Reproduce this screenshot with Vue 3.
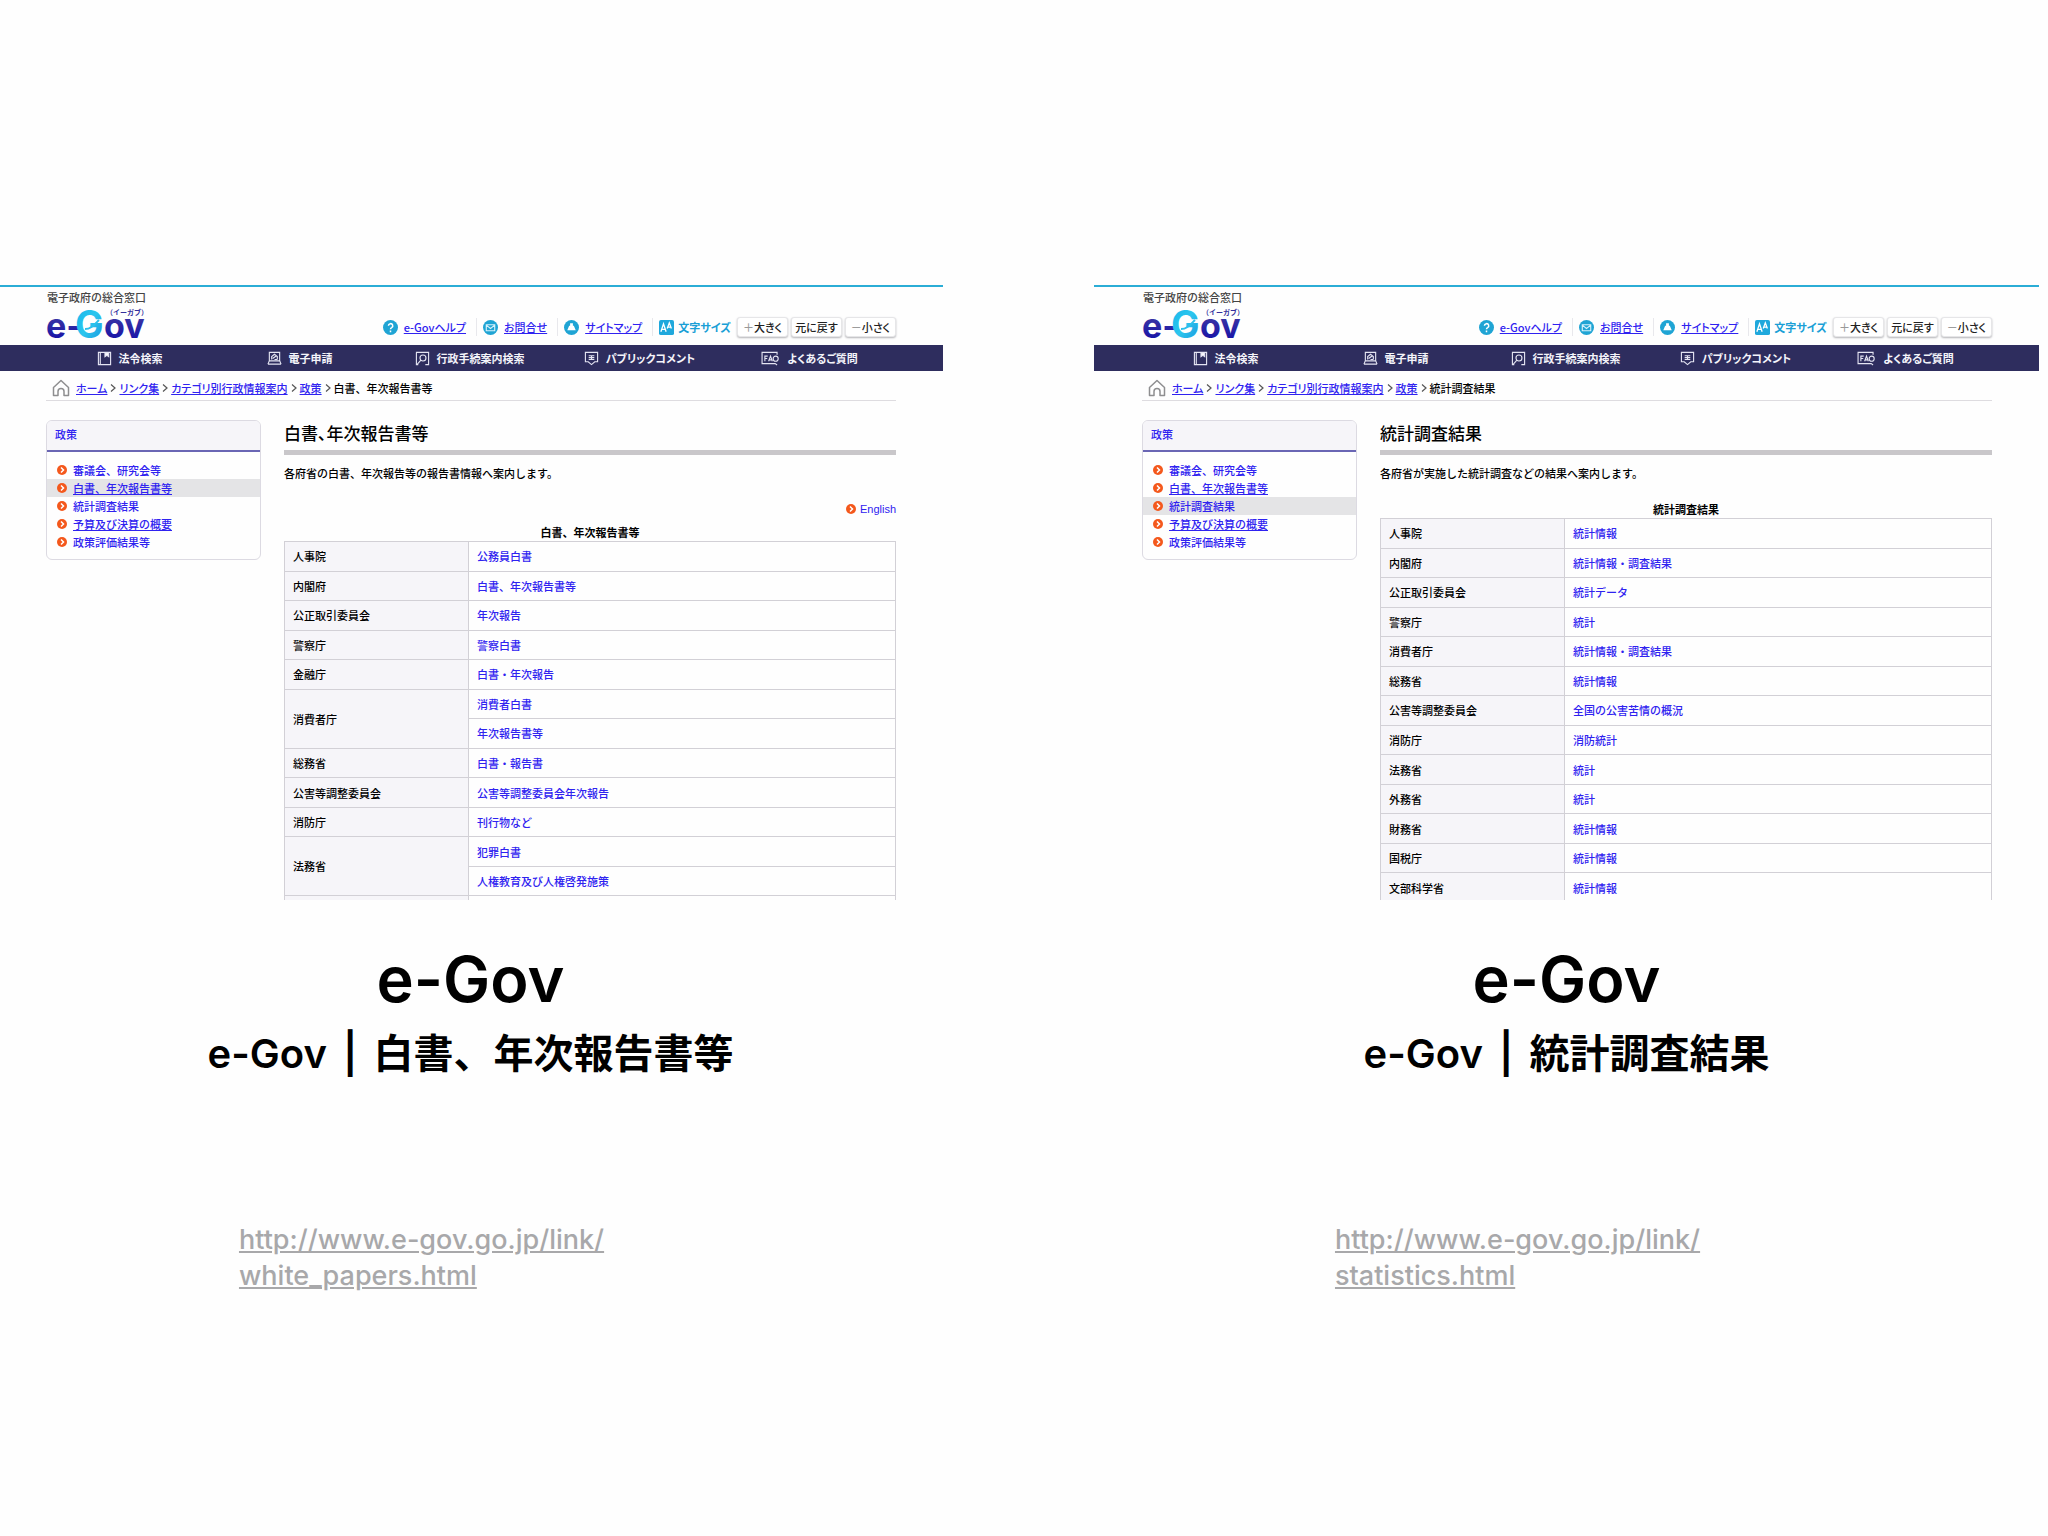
<script setup>
const utilities = [
  { icon: 'help', label: 'e-Govヘルプ' },
  { icon: 'mail', label: 'お問合せ' },
  { icon: 'map', label: 'サイトマップ' },
]

const sizes = [
  { sign: '＋', label: '大きく' },
  { sign: '', label: '元に戻す' },
  { sign: '－', label: '小さく' },
]

const services = [
  { icon: 'law', label: '法令検索' },
  { icon: 'apply', label: '電子申請' },
  { icon: 'search', label: '行政手続案内検索' },
  { icon: 'comment', label: 'パブリックコメント' },
  { icon: 'faq', label: 'よくあるご質問' },
]

const crumbs = ['ホーム', 'リンク集', 'カテゴリ別行政情報案内', '政策']

const topics = [
  '審議会、研究会等',
  '白書、年次報告書等',
  '統計調査結果',
  '予算及び決算の概要',
  '政策評価結果等',
]

const sites = [
  {
    id: 'papers',
    title: '白書、年次報告書等',
    intro: '各府省の白書、年次報告等の報告書情報へ案内します。',
    english: true,
    host: 'http://www.e-gov.go.jp/link/',
    file: 'white_papers.html',
    rows: [
      { name: '人事院', links: ['公務員白書'] },
      { name: '内閣府', links: ['白書、年次報告書等'] },
      { name: '公正取引委員会', links: ['年次報告'] },
      { name: '警察庁', links: ['警察白書'] },
      { name: '金融庁', links: ['白書・年次報告'] },
      { name: '消費者庁', links: ['消費者白書', '年次報告書等'] },
      { name: '総務省', links: ['白書・報告書'] },
      { name: '公害等調整委員会', links: ['公害等調整委員会年次報告'] },
      { name: '消防庁', links: ['刊行物など'] },
      { name: '法務省', links: ['犯罪白書', '人権教育及び人権啓発施策'] },
      { name: '', links: [''] },
    ],
  },
  {
    id: 'statistics',
    title: '統計調査結果',
    intro: '各府省が実施した統計調査などの結果へ案内します。',
    english: false,
    host: 'http://www.e-gov.go.jp/link/',
    file: 'statistics.html',
    rows: [
      { name: '人事院', links: ['統計情報'] },
      { name: '内閣府', links: ['統計情報・調査結果'] },
      { name: '公正取引委員会', links: ['統計データ'] },
      { name: '警察庁', links: ['統計'] },
      { name: '消費者庁', links: ['統計情報・調査結果'] },
      { name: '総務省', links: ['統計情報'] },
      { name: '公害等調整委員会', links: ['全国の公害苦情の概況'] },
      { name: '消防庁', links: ['消防統計'] },
      { name: '法務省', links: ['統計'] },
      { name: '外務省', links: ['統計'] },
      { name: '財務省', links: ['統計情報'] },
      { name: '国税庁', links: ['統計情報'] },
      { name: '文部科学省', links: ['統計情報'] },
    ],
  },
]
</script>

<template>
  <main class="page">
    <section v-for="site in sites" :key="site.id" class="card">
      <div class="preview">
        <header class="masthead">
          <div class="brand">
            <span class="tagline">電子政府の総合窓口</span>
            <svg class="logo" viewBox="0 0 100 36" role="img" aria-label="e-Gov">
              <defs>
                <linearGradient :id="site.id + '-g'" x1="0" y1="0" x2="1" y2="1">
                  <stop offset="0" stop-color="#12b4ea" />
                  <stop offset="0.5" stop-color="#2cc6ee" />
                  <stop offset="1" stop-color="#1690dc" />
                </linearGradient>
                <linearGradient :id="site.id + '-b'" x1="0" y1="0" x2="0" y2="1">
                  <stop offset="0.3" stop-color="#3a34a4" />
                  <stop offset="1" stop-color="#0d0aa8" />
                </linearGradient>
              </defs>
              <text class="logo-text" x="0" y="31" :fill="`url(#${site.id}-b)`">e-</text>
              <text class="logo-g" x="29" y="31" :fill="`url(#${site.id}-g)`">G</text>
              <text class="logo-text" x="58" y="31" :fill="`url(#${site.id}-b)`">ov</text>
              <path d="M39 22c6 0 9-4 14-9" fill="none" stroke="#2cc0ec" stroke-width="2" />
              <text class="logo-kana" x="60" y="8">（イーガブ）</text>
            </svg>
          </div>
          <div class="tools">
            <a v-for="u in utilities" :key="u.icon" class="tool" href="#">
              <svg viewBox="0 0 16 16" aria-hidden="true">
                <circle cx="8" cy="8" r="8" fill="#1fa4d4" />
                <path v-if="u.icon === 'help'" d="M5.800 6.200a2.300 2.300 0 1 1 3.400 2q-1.200.6-1.200 1.600M8 11.200v1.800" fill="none" stroke="#fff" stroke-width="1.600" />
                <path v-else-if="u.icon === 'mail'" d="M3.500 5h9v6.500h-9zM3.500 5.500 8 9l4.500-3.500" fill="none" stroke="#d5f1fb" stroke-width="1.200" />
                <path v-else d="M6.500 3.500h3v2.500h1l2 5h-9l2-5h1z" fill="#fff" />
              </svg>
              <span>{{ u.label }}</span>
            </a>
            <span class="size-label">
              <svg viewBox="0 0 16 16" aria-hidden="true">
                <rect width="16" height="16" rx="2" fill="#1fa8dc" />
                <path d="M2 12.500 4.800 4l2.800 8.500M3 10h3.500M8.800 9 11 3l2.200 6M9.500 7.500h3" fill="none" stroke="#fff" stroke-width="1.400" />
              </svg>
              文字サイズ
            </span>
            <div class="sizes">
              <button v-for="s in sizes" :key="s.label" type="button">
                <i v-if="s.sign">{{ s.sign }}</i>{{ s.label }}
              </button>
            </div>
          </div>
        </header>

        <nav class="services">
          <a v-for="s in services" :key="s.icon" href="#">
            <svg v-if="s.icon === 'faq'" class="wide" viewBox="0 0 20 16" aria-hidden="true">
              <path d="M17 4V1.500H1v12h14l2 1.500" />
              <path d="M4 11V5.500h3M4 8h2.500M8 11l2-5.500L12 11M9 9.500h2" />
              <circle cx="15.500" cy="8.200" r="2.700" />
            </svg>
            <svg v-else viewBox="0 0 16 16" aria-hidden="true">
              <template v-if="s.icon === 'law'">
                <path d="M1.500 1.500h13v13h-13zM3.500 1.500v13" />
                <path d="M8.500 2v4l2-1.500 2 1.500V2z" fill="#fff" />
              </template>
              <template v-else-if="s.icon === 'apply'">
                <path d="M2.500 1.500h11v9h-11zM1 14h14M2.500 10.500 1 14M13.500 10.500 15 14" />
                <path d="M5 9V6l3-2.500L11 6v3M6 8l4-3M8 9h3" />
              </template>
              <template v-else-if="s.icon === 'search'">
                <path d="M1 1.500h13.500v13H11M1.500 1.500v13h2" />
                <circle cx="8.500" cy="7.500" r="3.200" /><path d="M6.300 9.800 2.500 14" />
              </template>
              <template v-else>
                <path d="M1.500 1.500h13v10h-3l-3.500 3-3.500-3h-3z" />
                <path d="M5 5h6M5 7h6M5 9h6M8 4.500V9" />
              </template>
            </svg>
            <span>{{ s.label }}</span>
          </a>
        </nav>

        <div class="body">
          <nav class="crumbs">
            <svg viewBox="0 0 18 18" aria-hidden="true">
              <path d="M1.500 8.500 9 1.500l7.500 7V16.500h-4.500v-4a3 3 0 0 0-6 0v4H1.500z" fill="none" stroke="#8e8e90" stroke-width="1.500" stroke-linejoin="round" />
            </svg>
            <template v-for="c in crumbs" :key="c">
              <a href="#">{{ c }}</a>
              <svg class="sep" viewBox="0 0 12 12" aria-hidden="true">
                <path d="m4 2.500 4 3.500-4 3.500" fill="none" stroke="#555" stroke-width="1.200" />
              </svg>
            </template>
            <span>{{ site.title }}</span>
          </nav>

          <div class="columns">
            <aside class="side">
              <div class="side-head"><a href="#">政策</a></div>
              <ul>
                <li v-for="t in topics" :key="t" :class="{ current: t === site.title }">
                  <svg class="bullet" viewBox="0 0 10 10" aria-hidden="true">
                    <circle cx="5" cy="5" r="5" fill="#f4581c" />
                    <path d="m4 2.500 2.500 2.500L4 7.500" fill="none" stroke="#fff" stroke-width="1.500" />
                  </svg>
                  <a href="#">{{ t }}</a>
                </li>
              </ul>
            </aside>

            <article class="content">
              <h1>{{ site.title }}</h1>
              <p class="intro">{{ site.intro }}</p>
              <div v-if="site.english" class="language">
                <svg class="bullet" viewBox="0 0 10 10" aria-hidden="true">
                  <circle cx="5" cy="5" r="5" fill="#f4581c" />
                  <path d="m4 2.500 2.500 2.500L4 7.500" fill="none" stroke="#fff" stroke-width="1.500" />
                </svg>
                <a href="#">English</a>
              </div>
              <table>
                <caption>{{ site.title }}</caption>
                <tbody>
                  <template v-for="(r, n) in site.rows" :key="n">
                    <tr v-for="(l, i) in r.links" :key="i">
                      <th v-if="i === 0" scope="row" :rowspan="r.links.length">{{ r.name }}</th>
                      <td><a v-if="l" href="#">{{ l }}</a></td>
                    </tr>
                  </template>
                </tbody>
              </table>
            </article>
          </div>
        </div>
      </div>

      <h2>e-Gov</h2>
      <h3>e-Gov <b>|</b> {{ site.title }}</h3>
      <p class="address"><a :href="site.host + site.file">{{ site.host }}<wbr />{{ site.file }}</a></p>
    </section>
  </main>
</template>

<style>
body {
  margin: 0;
  background: #fefefe;
}
</style>

<style scoped>
* {
  box-sizing: border-box;
}

.page {
  display: grid;
  grid-template-columns: 945fr 151fr 945fr 9fr;
  margin-left: -2px;
  padding-top: 285px;
  color: #000;
  font-family: Inter, "Noto Sans CJK JP", sans-serif;
}

.card {
  grid-column: 1;
  min-width: 0;
}

.card + .card {
  grid-column: 3;
}

/* site preview */
.preview {
  aspect-ratio: 945 / 615;
  overflow: hidden;
  border-top: 2px solid #2badd6;
  background: #fefefe;
  font-family: "Noto Sans CJK JP", sans-serif;
  font-size: 11px;
  font-weight: 500;
  line-height: 18px;
  white-space: nowrap;
}

.preview a {
  color: #2f22f0;
  text-decoration: none;
}

.masthead {
  display: flex;
  justify-content: space-between;
  height: 58px;
  padding: 0 47px 0 48px;
}

.brand {
  display: flex;
  flex-direction: column;
}

.tagline {
  padding-left: 1px;
  color: #444;
  line-height: 20px;
}

.logo {
  width: 100px;
  height: 36px;
  overflow: visible;
}

.logo-text {
  font: 700 34px Inter, sans-serif;
}

.logo-g {
  font: 700 38px Inter, sans-serif;
}

.logo-kana {
  fill: #35309c;
  font: 700 7px "Noto Sans CJK JP", sans-serif;
}

.tools {
  display: flex;
  align-items: center;
  padding-top: 22px;
}

.tool {
  display: flex;
  align-items: center;
  gap: 6px;
  margin-right: 6px;
  padding-right: 10px;
  border-right: 1px solid #e8e8ec;
  font-feature-settings: "palt";
}

.tool svg,
.size-label svg {
  width: 15px;
  height: 15px;
}

.preview .tool span {
  text-decoration: underline;
}

.size-label {
  display: flex;
  align-items: center;
  gap: 4px;
  margin-right: 6px;
  color: #1a9fd6;
  font-weight: 700;
  font-feature-settings: "palt";
}

.sizes {
  display: flex;
  gap: 3px;
}

.sizes button {
  display: flex;
  align-items: center;
  justify-content: center;
  width: 51px;
  height: 20px;
  padding: 0;
  border: 1px solid #e6e6e8;
  border-radius: 3px;
  background: #fff;
  box-shadow: 0 1px 2px #b4b4b8;
  color: #222;
  font: 500 11px "Noto Sans CJK JP", sans-serif;
  font-feature-settings: "palt";
}

.sizes i {
  color: #999;
  font-style: normal;
}

.services {
  display: grid;
  grid-template-columns: repeat(5, 1fr);
  height: 26px;
  padding: 0 47px 0 48px;
  background: #2e2d5e;
}

.services a {
  display: flex;
  align-items: center;
  justify-content: center;
  gap: 7px;
  padding-right: 3px;
  color: #f4f4fa;
  font-weight: 700;
  font-feature-settings: "palt";
}

.services svg {
  width: 15px;
  height: 15px;
  fill: none;
  stroke: #e4e4f2;
  stroke-width: 1.2;
}

.services .wide {
  width: 19px;
}

.body {
  padding: 0 47px 0 48px;
}

.crumbs {
  display: flex;
  align-items: center;
  height: 30px;
  margin-bottom: 19px;
  padding: 4px 0 0 6px;
  border-bottom: 1px solid #dedce0;
}

.crumbs svg {
  width: 18px;
  height: 18px;
  margin-right: 6px;
}

.crumbs .sep {
  width: 12px;
  height: 12px;
  margin: 0;
}

.crumbs a {
  text-decoration: underline;
  font-feature-settings: "palt";
}

.columns {
  display: grid;
  grid-template-columns: 215px 1fr;
  align-items: start;
  gap: 23px;
}

.side {
  overflow: hidden;
  border: 1px solid #dcdae2;
  border-radius: 6px;
}

.side-head {
  height: 31px;
  padding: 4px 8px;
  border-bottom: 2px solid #6a66b4;
  background: #f6f5f9;
}

.side ul {
  margin: 0;
  padding: 9px 0 8px;
  list-style: none;
}

.side li {
  display: flex;
  align-items: center;
  gap: 6px;
  height: 18px;
  padding-left: 10px;
}

.side li:nth-child(even) a {
  text-decoration: underline;
}

.side .current {
  background: #e4e4e6;
}

.bullet {
  width: 10px;
  height: 10px;
}

h1 {
  margin: 0 0 9px;
  padding-bottom: 4px;
  border-bottom: 5px solid #c9c7ca;
  font-size: 17px;
  font-weight: 500;
  line-height: 26px;
  font-feature-settings: "palt";
}

.intro {
  margin: 0 0 18px;
}

.language {
  display: flex;
  align-items: center;
  justify-content: flex-end;
  gap: 4px;
  margin-bottom: 5px;
  font-family: "Liberation Sans", sans-serif;
}

table {
  width: 100%;
  height: 385px;
  border-collapse: collapse;
  table-layout: fixed;
}

caption {
  font-weight: 700;
}

th,
td {
  height: 29px;
  padding: 0 8px;
  border: 1px solid #d2d0d6;
  text-align: left;
}

th {
  width: 184px;
  background: #f6f5f9;
  font-weight: 500;
}

/* text below the preview */
h2,
h3 {
  margin: 0;
  font-weight: 600;
  text-align: center;
}

h2 {
  padding-top: 39px;
  font-size: 63px;
  line-height: 80px;
}

h3 {
  padding-top: 9px;
  font-size: 40px;
  line-height: 52px;
}

h3 b {
  padding: 0 6px;
  font-weight: 600;
}

.address {
  width: 49%;
  margin: 142px auto 0;
  font-size: 27px;
  font-weight: 500;
  line-height: 36px;
}

.address a {
  color: #a8a8aa;
}
</style>
